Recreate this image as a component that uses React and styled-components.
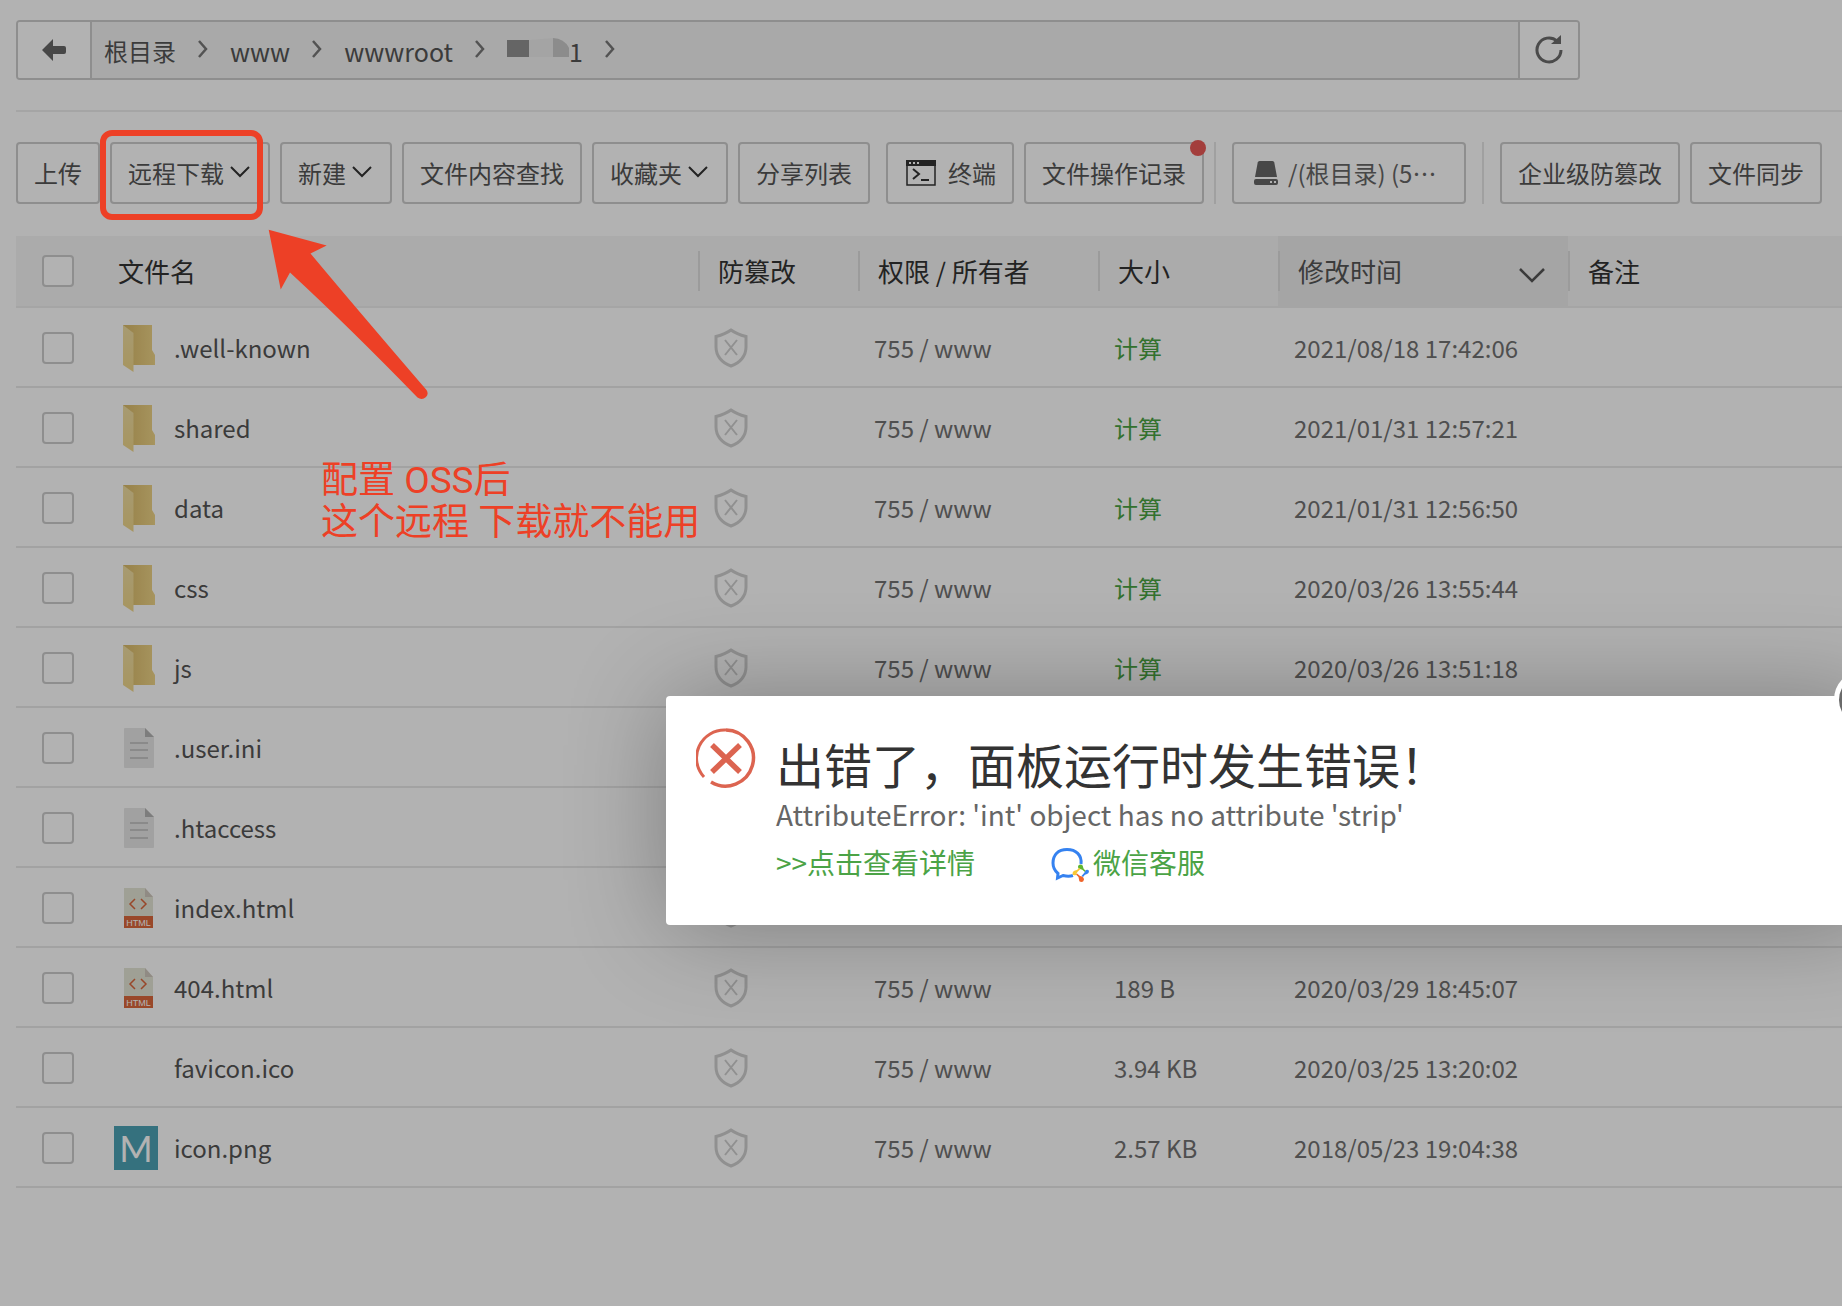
import styled, { createGlobalStyle, css } from "styled-components";

const GlobalStyle = createGlobalStyle`
  * { box-sizing: border-box; }
  html, body, #root { height: 100%; }
  body {
    margin: 0;
    overflow: hidden;
    background: #fff;
    color: #555;
    font-family: "Noto Sans CJK SC", "Noto Sans", sans-serif;
    font-size: 24px;
    line-height: 32px;
  }
  button, input { font: inherit; color: inherit; margin: 0; }
  a { text-decoration: none; }
`;

const Page = styled.main`
  position: relative;
  min-height: 100%;
  padding: 20px 0 0 16px;
  overflow: hidden;
`;

/* --- Path bar */

const PathBar = styled.nav`
  display: flex;
  height: 60px;
  max-width: 1564px;
  border: 2px solid #ccc;
  border-radius: 4px;
  overflow: hidden;
`;

const PathButton = styled.button`
  display: flex;
  align-items: center;
  justify-content: center;
  width: ${({ $wide }) => ($wide ? "74px" : "60px")};
  padding: 0;
  border: 0 solid #ccc;
  border-width: ${({ $wide }) => ($wide ? "0 2px 0 0" : "0 0 0 2px")};
  background: #fff;
`;

const Crumbs = styled.ol`
  display: flex;
  flex: 1;
  align-items: center;
  margin: 0;
  padding: 2px 0 0 12px;
  list-style: none;
  background: #f3f3f3;
`;

const Crumb = styled.li`
  display: flex;
  align-items: center;
  font-size: 25px;
  &:first-child { font-size: 24px; }
`;

const CrumbLink = styled.a`
  display: flex;
  align-items: center;
  color: #555;
`;

const CrumbArrow = styled.svg`
  margin: 0 22px 4px;
`;

const Divider = styled.hr`
  height: 2px;
  margin: 30px 0;
  border: 0;
  background: #ececec;
`;

/* --- Toolbar */

const Toolbar = styled.div`
  display: flex;
  gap: 10px;
  margin-bottom: 32px;
  white-space: nowrap;
`;

const ToolGroup = styled.div`
  display: flex;
  gap: 10px;
  margin-left: ${({ $spaced }) => ($spaced ? "6px" : "0")};
`;

const ToolButton = styled.button`
  position: relative;
  display: flex;
  flex: none;
  align-items: center;
  height: 62px;
  padding: 0 16px;
  border: 2px solid #ccc;
  border-radius: 4px;
  background: #fff;
  ${({ $disk }) =>
    $disk &&
    css`
      width: 234px;
      padding: 0 18px;
      gap: 8px;
      color: #666;
    `}
`;

const Separator = styled.span`
  width: 2px;
  background: #e6e6e6;
  margin-left: ${({ $spaced }) => ($spaced ? "6px" : "0")};
`;

const NoticeDot = styled.span`
  position: absolute;
  top: -4px;
  right: -4px;
  width: 16px;
  height: 16px;
  border-radius: 50%;
  background: #ea5a57;
`;

/* --- File table */

const FileTable = styled.table`
  width: 100%;
  table-layout: fixed;
  border-collapse: separate;
  border-spacing: 0;
`;

const Col = styled.col`
  width: ${({ $width }) => $width};
`;

const HeadCell = styled.th`
  height: 72px;
  padding: 0;
  border-bottom: 2px solid #ececec;
  background: ${({ $sorted }) => ($sorted ? "#ececec" : "#f5f5f5")};
  color: ${({ $sorted }) => ($sorted ? "#555" : "#333")};
  font-size: 26px;
  font-weight: 400;
  text-align: left;
`;

const HeadLabel = styled.div`
  display: flex;
  align-items: center;
  justify-content: space-between;
  height: 40px;
  padding: 0 22px 0 18px;
  border-left: 2px solid ${({ $plain }) => ($plain ? "transparent" : "#dedede")};
`;

const SortArrow = styled.svg`
  margin-top: 8px;
`;

const Cell = styled.td`
  height: 80px;
  padding: 2px 16px 0;
  border-bottom: 2px solid #e8e8e8;
  color: #717171;
  white-space: nowrap;
`;

const CheckCell = styled(Cell)`
  padding: 2px 0 0 26px;
`;

const CheckBox = styled.input`
  display: block;
  width: 32px;
  height: 32px;
  appearance: none;
  border: 2px solid #ccc;
  border-radius: 4px;
  background: #fff;
`;

const CheckHead = styled(HeadCell)`
  padding: 0 0 0 26px;
`;

const FileName = styled.a`
  display: flex;
  align-items: center;
  gap: 16px;
  color: #555;
`;

const FileIcon = styled.svg`
  display: block;
  flex: none;
  width: 44px;
  height: 48px;
`;

const ImageThumb = styled.span`
  display: flex;
  align-items: center;
  justify-content: center;
  width: 44px;
  height: 44px;
  background: #4ca3b5;
  color: #fff;
  font-family: Lato, sans-serif;
  font-size: 36px;
  font-weight: 400;
`;

const CalcLink = styled.a`
  color: #4aa343;
`;

const Shield = styled.svg`
  display: block;
`;

/* --- Error layer */

const Scrim = styled.div`
  position: absolute;
  inset: 0;
  background: rgba(0, 0, 0, 0.3);
`;

const ErrorDialog = styled.section`
  position: absolute;
  top: 696px;
  left: 666px;
  display: flex;
  gap: 20px;
  width: 1210px;
  height: 229px;
  padding: 32px 30px;
  border-radius: 4px;
  background: #fff;
  box-shadow: 2px 2px 100px rgba(0, 0, 0, 0.3);
`;

const DialogBody = styled.div`
  display: flex;
  flex-direction: column;
`;

const DialogTitle = styled.h1`
  margin: 0;
  color: #333;
  font-size: 48px;
  font-weight: 400;
  line-height: 70px;
`;

const DialogText = styled.p`
  margin: 0;
  color: #666;
  font-size: 28px;
  line-height: 32px;
`;

const DialogLinks = styled.div`
  display: flex;
  gap: 76px;
  margin-top: 12px;
  font-size: 28px;
`;

const DialogLink = styled.a`
  display: flex;
  align-items: center;
  gap: 4px;
  height: 40px;
  color: #4ba346;
`;

const CloseButton = styled.button`
  position: absolute;
  top: -26px;
  right: -18px;
  width: 60px;
  height: 60px;
  padding: 0;
  border: 5px solid #fff;
  border-radius: 50%;
  background: #6a6a6a;
`;

/* --- Red mark-up drawn over the page */

const MarkFrame = styled.div`
  position: absolute;
  top: 130px;
  left: 100px;
  width: 163px;
  height: 90px;
  border: 6px solid #ed4026;
  border-radius: 12px;
`;

const MarkArrow = styled.svg`
  position: absolute;
  top: 229px;
  left: 268px;
`;

const MarkText = styled.p`
  position: absolute;
  top: 460px;
  left: 321px;
  margin: 0;
  color: #ed4026;
  font-family: Roboto, "Noto Sans CJK SC", sans-serif;
  font-size: 37px;
  line-height: 42px;
  white-space: nowrap;
`;

const files = [
  { name: ".well-known", kind: "folder", owner: "755 / www", date: "2021/08/18 17:42:06" },
  { name: "shared", kind: "folder", owner: "755 / www", date: "2021/01/31 12:57:21" },
  { name: "data", kind: "folder", owner: "755 / www", date: "2021/01/31 12:56:50" },
  { name: "css", kind: "folder", owner: "755 / www", date: "2020/03/26 13:55:44" },
  { name: "js", kind: "folder", owner: "755 / www", date: "2020/03/26 13:51:18" },
  { name: ".user.ini", kind: "text" },
  { name: ".htaccess", kind: "text" },
  { name: "index.html", kind: "html" },
  { name: "404.html", kind: "html", owner: "755 / www", size: "189 B", date: "2020/03/29 18:45:07" },
  { name: "favicon.ico", kind: "none", owner: "755 / www", size: "3.94 KB", date: "2020/03/25 13:20:02" },
  { name: "icon.png", kind: "image", owner: "755 / www", size: "2.57 KB", date: "2018/05/23 19:04:38" },
];

function Chevron() {
  return (
    <svg width="28" height="20" viewBox="0 0 28 20" fill="none" aria-hidden="true">
      <path d="M7 4l9 9 9-9" stroke="#333" strokeWidth="2" />
    </svg>
  );
}

function TerminalIcon() {
  return (
    <svg width="44" height="28" viewBox="0 0 44 28" fill="none" aria-hidden="true">
      <path d="M3 2h28v24H3z" stroke="#333" strokeWidth="1.500" />
      <path d="M2 1h30v6H2z" fill="#333" />
      <path d="M5 4h2M9 4h2M13 4h2" stroke="#fff" strokeWidth="2" />
      <path d="M9 10l6 5-6 5M17 21h8" stroke="#333" strokeWidth="2" />
    </svg>
  );
}

function DiskIcon() {
  return (
    <svg width="28" height="28" viewBox="0 0 28 28" fill="#666" aria-hidden="true">
      <path d="M7.500 2h13q1.500 0 1.800 1.500L25 18H3L5.700 3.500Q6 2 7.500 2z" />
      <path d="M4 20h20q2 0 2 2v2q0 2-2 2H4q-2 0-2-2v-2q0-2 2-2zM18 22v2h2v-2zM22 22v2h2v-2z" fillRule="evenodd" />
    </svg>
  );
}

function FolderIcon() {
  return (
    <FileIcon viewBox="0 0 44 48" aria-hidden="true">
      <defs>
        <linearGradient id="folderBack" x1="0" y1="0" x2="1" y2="0">
          <stop offset="0" stopColor="#d8b968" />
          <stop offset="1" stopColor="#efd588" />
        </linearGradient>
        <linearGradient id="folderFlap" x1="0" y1="0" x2="0" y2="1">
          <stop offset="0" stopColor="#f0dea4" />
          <stop offset="1" stopColor="#f0d68a" />
        </linearGradient>
      </defs>
      <path d="M9 1h29v25l3 5v10H9z" fill="url(#folderBack)" />
      <path d="M9 1l10.500 8v39L9 41z" fill="url(#folderFlap)" />
    </FileIcon>
  );
}

function TextFileIcon() {
  return (
    <FileIcon viewBox="0 0 44 48" aria-hidden="true">
      <path d="M11 4h20l9 9v30q0 1-1 1H11q-1 0-1-1V5q0-1 1-1z" fill="#e7e7e7" />
      <path d="M31 4l9 9h-9z" fill="#b4b4b4" />
      <path d="M16 19h18M16 26h18M16 34h18" stroke="#c6c6c6" strokeWidth="2" />
    </FileIcon>
  );
}

function HtmlFileIcon() {
  return (
    <FileIcon viewBox="0 0 44 48" aria-hidden="true">
      <path d="M10 4h21l8 9v31H10z" fill="#e4e5d6" />
      <path d="M31 4l8 9h-8z" fill="#cfc7bd" />
      <path d="M21 15l-5 5 5 5M27 15l5 5-5 5" fill="none" stroke="#db673c" strokeWidth="1.500" />
      <path d="M10 32h29v12H10z" fill="#db673c" />
      <text x="24.500" y="42" textAnchor="middle" fontFamily="Liberation Sans, sans-serif" fontSize="9" fill="#fff">
        HTML
      </text>
    </FileIcon>
  );
}

const icons = {
  folder: <FolderIcon />,
  text: <TextFileIcon />,
  html: <HtmlFileIcon />,
  none: <FileIcon aria-hidden="true" />,
  image: <ImageThumb aria-hidden="true">M</ImageThumb>,
};

function ShieldIcon() {
  return (
    <Shield width="34" height="40" viewBox="0 0 34 40" fill="none" stroke="#cfcfcf" aria-hidden="true">
      <path d="M17 2C13 5 8 7 2 8.500V19c0 9 6 16 15 19 9-3 15-10 15-19V8.500C26 7 21 5 17 2z" strokeWidth="3" />
      <path d="M11 12l12 15M23 12L11 27" strokeWidth="2" />
    </Shield>
  );
}

function PathArrow() {
  return (
    <CrumbArrow width="10" height="18" viewBox="0 0 10 18" fill="none" aria-hidden="true">
      <path d="M1 1l7 8-7 8" stroke="#777" strokeWidth="2.500" />
    </CrumbArrow>
  );
}

function PathNav() {
  return (
    <PathBar aria-label="路径">
      <PathButton type="button" $wide aria-label="返回">
        <svg width="24" height="24" viewBox="0 0 24 24" fill="#666" aria-hidden="true">
          <path d="M0 12L11 1v7h11q2 0 2 2v4q0 2-2 2H11v7z" />
        </svg>
      </PathButton>
      <Crumbs>
        {["根目录", "www", "wwwroot"].map((label) => (
          <Crumb key={label}>
            <CrumbLink href="#">{label}</CrumbLink>
            <PathArrow />
          </Crumb>
        ))}
        <Crumb>
          <CrumbLink href="#">
            <svg width="62" height="26" viewBox="0 0 62 26" aria-hidden="true">
              <path d="M0 2h22v17H0z" fill="#919191" />
              <path d="M22 2l24-2v19H22z" fill="#ebebeb" />
              <path d="M46 0q16 1 19 19H46z" fill="#c9c9c9" />
            </svg>
            1
          </CrumbLink>
          <PathArrow />
        </Crumb>
      </Crumbs>
      <PathButton type="button" aria-label="刷新">
        <svg width="28" height="30" viewBox="0 0 28 30" fill="none" aria-hidden="true">
          <path d="M26 15a12 12 0 1 1-4-9" stroke="#6c6c6c" strokeWidth="3" />
          <path d="M26 0v9H16z" fill="#6c6c6c" />
        </svg>
      </PathButton>
    </PathBar>
  );
}

function FileToolbar() {
  return (
    <Toolbar>
      <ToolButton type="button">上传</ToolButton>
      <ToolButton type="button">远程下载<Chevron /></ToolButton>
      <ToolButton type="button">新建<Chevron /></ToolButton>
      <ToolButton type="button">文件内容查找</ToolButton>
      <ToolButton type="button">收藏夹<Chevron /></ToolButton>
      <ToolButton type="button">分享列表</ToolButton>
      <ToolGroup $spaced>
        <ToolButton type="button"><TerminalIcon />终端</ToolButton>
        <ToolButton type="button">
          文件操作记录
          <NoticeDot />
        </ToolButton>
      </ToolGroup>
      <Separator />
      <ToolGroup $spaced>
        <ToolButton type="button" $disk><DiskIcon />/(根目录) (5…</ToolButton>
      </ToolGroup>
      <Separator $spaced />
      <ToolGroup $spaced>
        <ToolButton type="button">企业级防篡改</ToolButton>
        <ToolButton type="button">文件同步</ToolButton>
      </ToolGroup>
    </Toolbar>
  );
}

function FileRow({ file }) {
  return (
    <tr>
      <CheckCell>
        <CheckBox type="checkbox" aria-label={file.name} />
      </CheckCell>
      <Cell>
        <FileName href="#">
          {icons[file.kind]}
          {file.name}
        </FileName>
      </Cell>
      <Cell><ShieldIcon /></Cell>
      <Cell>{file.owner}</Cell>
      <Cell>{file.kind === "folder" ? <CalcLink href="#">计算</CalcLink> : file.size}</Cell>
      <Cell>{file.date}</Cell>
      <Cell />
    </tr>
  );
}

function FileList() {
  return (
    <FileTable>
      <colgroup>
        <Col $width="82px" />
        <Col $width="600px" />
        <Col $width="160px" />
        <Col $width="240px" />
        <Col $width="180px" />
        <Col $width="290px" />
        <Col $width="auto" />
      </colgroup>
      <thead>
        <tr>
          <CheckHead>
            <CheckBox type="checkbox" aria-label="全选" />
          </CheckHead>
          <HeadCell><HeadLabel $plain>文件名</HeadLabel></HeadCell>
          <HeadCell><HeadLabel>防篡改</HeadLabel></HeadCell>
          <HeadCell><HeadLabel>权限 / 所有者</HeadLabel></HeadCell>
          <HeadCell><HeadLabel>大小</HeadLabel></HeadCell>
          <HeadCell $sorted>
            <HeadLabel>
              修改时间
              <SortArrow width="28" height="18" viewBox="0 0 28 18" fill="none" aria-hidden="true">
                <path d="M2 3l12 12L26 3" stroke="#555" strokeWidth="2.500" />
              </SortArrow>
            </HeadLabel>
          </HeadCell>
          <HeadCell><HeadLabel>备注</HeadLabel></HeadCell>
        </tr>
      </thead>
      <tbody>
        {files.map((file) => (
          <FileRow key={file.name} file={file} />
        ))}
      </tbody>
    </FileTable>
  );
}

function WechatServiceIcon() {
  return (
    <svg width="38" height="40" viewBox="0 0 38 40" fill="none" aria-hidden="true">
      <path
        d="M30 22C31 13 25 7.500 16 7.500S2 13 2 21c0 5 2 8 5 10.500L6.500 36 12 33.500c4 1 7 1 10 0"
        stroke="#3582f0"
        strokeWidth="3"
      />
      <path d="M27 25q0-2.500 2.500-2.500T32 25q0 2 3 4l-1 1q-3-3-5-3-2 0-2-2z" fill="#5eb52f" />
      <path d="M35 28q2-1 3 1 0 2.500-2 3-2 0-4 3l-1.500-1q3-3 4.500-6z" fill="#3582f0" />
      <path d="M30.500 40q-2.500 0-2.500-2.500 0-3-3-5l1-1q3 3 5 3 2 1 2 3-.5 2.500-2.500 2.500z" fill="#f0652b" />
      <path d="M25 33q-3 1-3.500-1 0-3 2.500-3.500 2 0 4-2.500l1.500 1q-4 3-4.500 6z" fill="#f8c734" />
    </svg>
  );
}

function ErrorLayer() {
  return (
    <ErrorDialog role="dialog" aria-labelledby="error-title">
      <svg width="60" height="60" viewBox="0 0 60 60" fill="none" stroke="#dc6450" aria-hidden="true">
        <path d="M30 2A28 28 0 1 1 15 54" strokeWidth="3.500" />
        <path d="M8 49A28 28 0 0 1 30 2" strokeWidth="3" />
        <path d="M16 17l28 27M44 17L16 44" strokeWidth="5.500" />
      </svg>
      <DialogBody>
        <DialogTitle id="error-title">出错了，面板运行时发生错误！</DialogTitle>
        <DialogText>AttributeError: 'int' object has no attribute 'strip'</DialogText>
        <DialogLinks>
          <DialogLink href="#">&gt;&gt;点击查看详情</DialogLink>
          <DialogLink href="#">
            <WechatServiceIcon />
            微信客服
          </DialogLink>
        </DialogLinks>
      </DialogBody>
      <CloseButton type="button" aria-label="关闭" />
    </ErrorDialog>
  );
}

function MarkUp() {
  return (
    <>
      <MarkFrame />
      <MarkArrow width="164" height="174" viewBox="0 0 164 174" aria-hidden="true">
        <path
          d="M0.700 0.700L58.700 16.500L42.500 24.500Q88 79 158.500 161Q161 165 158 168Q154 171.500 149.500 168.500Q82 99 22 43.500L12.700 60.500z"
          fill="#ed4026"
        />
      </MarkArrow>
      <MarkText>
        配置 OSS后
        <br />
        这个远程 下载就不能用
      </MarkText>
    </>
  );
}

export default function App() {
  return (
    <Page>
      <GlobalStyle />
      <PathNav />
      <Divider />
      <FileToolbar />
      <FileList />
      <Scrim />
      <ErrorLayer />
      <MarkUp />
    </Page>
  );
}
